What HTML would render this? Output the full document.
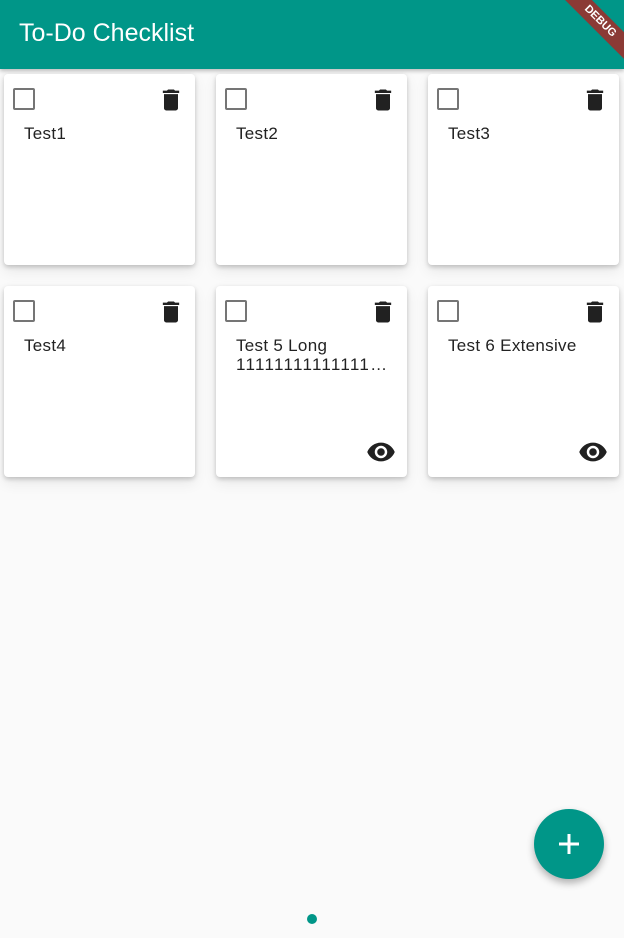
<!DOCTYPE html><html><head><style>
body{margin:0;width:624px;height:938px;background:#fafafa;font-family:"Liberation Sans",Roboto,sans-serif;position:relative;overflow:hidden}
.bar{position:absolute;left:0;top:0;width:624px;height:69px;background:#009688;box-shadow:0 2px 4px rgba(0,0,0,.25);overflow:hidden}
.bar h1{margin:0;position:absolute;left:19px;top:19px;font-size:25px;font-weight:normal;color:#fff}
.card{position:absolute;width:191px;height:191px;background:#fff;border-radius:4px;box-shadow:0 2px 5px rgba(0,0,0,.2),0 6px 14px rgba(0,0,0,.08)}
.cb{position:absolute;left:9px;top:14px;width:18px;height:18px;border:2px solid #757575;border-radius:2px}
.tr{position:absolute;left:153px;top:12px}
.t{position:absolute;left:20px;top:50px;font-size:17px;color:#222;line-height:19px;width:165px;letter-spacing:.3px}
.fab{position:absolute;left:534px;top:809px;width:70px;height:70px;border-radius:50%;background:#009688;box-shadow:0 4px 8px rgba(0,0,0,.3)}
.rib{position:absolute;left:535px;top:12px;width:130px;height:19px;background:#8b3a35;transform:rotate(45deg);color:#fff;font-size:11px;font-weight:bold;text-align:center;line-height:19px}
</style></head><body>
<div class="bar"><h1>To-Do Checklist</h1><div class="rib">DEBUG</div></div>
<svg width="0" height="0" style="position:absolute"><defs>
<symbol id="tr" viewBox="0 0 24 24"><path d="M6 19c0 1.1.9 2 2 2h8c1.1 0 2-.9 2-2V7H6v12zM19 4h-3.5l-1-1h-5l-1 1H5v2h14V4z" fill="#212121"/></symbol>
<symbol id="ey" viewBox="0 0 24 24"><path d="M12 4.5C7 4.5 2.73 7.61 1 12c1.73 4.39 6 7.5 11 7.5s9.27-3.11 11-7.5c-1.73-4.39-6-7.5-11-7.5zM12 17c-2.76 0-5-2.240-5-5s2.24-5 5-5 5 2.24 5 5-2.24 5-5 5zm0-8c-1.66 0-3 1.34-3 3s1.34 3 3 3 3-1.34 3-3-1.34-3-3-3z" fill="#212121"/></symbol>
</defs></svg>
<div class="card" style="left:4px;top:74px"><div class="cb"></div><svg class="tr" width="28" height="28"><use href="#tr"/></svg><div class="t">Test1</div></div>
<div class="card" style="left:216px;top:74px"><div class="cb"></div><svg class="tr" width="28" height="28"><use href="#tr"/></svg><div class="t">Test2</div></div>
<div class="card" style="left:428px;top:74px"><div class="cb"></div><svg class="tr" width="28" height="28"><use href="#tr"/></svg><div class="t">Test3</div></div>
<div class="card" style="left:4px;top:286px"><div class="cb"></div><svg class="tr" width="28" height="28"><use href="#tr"/></svg><div class="t">Test4</div></div>
<div class="card" style="left:216px;top:286px"><div class="cb"></div><svg class="tr" width="28" height="28"><use href="#tr"/></svg><div class="t">Test 5 Long<br><span style="letter-spacing:1.3px">11111111111111…</span></div><svg style="position:absolute;left:150px;top:151px" width="30" height="30"><use href="#ey"/></svg></div>
<div class="card" style="left:428px;top:286px"><div class="cb"></div><svg class="tr" width="28" height="28"><use href="#tr"/></svg><div class="t">Test 6 Extensive</div><svg style="position:absolute;left:150px;top:151px" width="30" height="30"><use href="#ey"/></svg></div>
<div class="fab"><svg width="70" height="70"><path d="M35 25v20M25 35h20" stroke="#fff" stroke-width="3"/></svg></div>
<div style="position:absolute;left:307px;top:914px;width:10px;height:10px;border-radius:50%;background:#009688"></div>
</body></html>
